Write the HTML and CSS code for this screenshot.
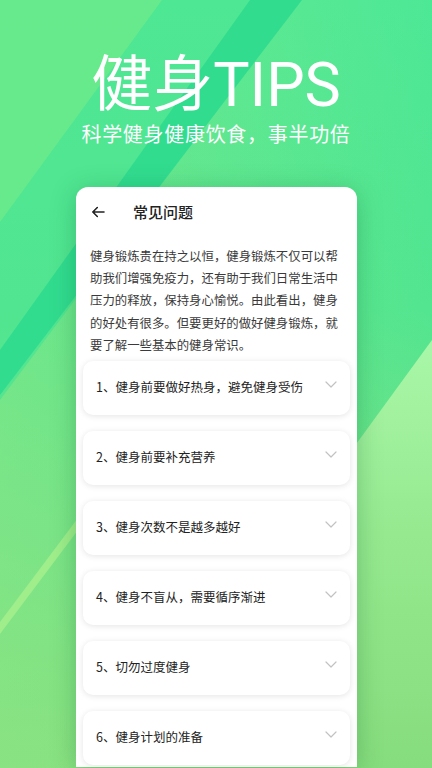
FILE: index.html
```html
<!DOCTYPE html>
<html lang="zh-CN">
<head>
<meta charset="utf-8">
<title>健身TIPS</title>
<link rel="stylesheet" href="styles.css">
</head>
<body>
<svg class="bg" width="432" height="768" viewBox="0 0 432 768" aria-hidden="true">
  <defs>
    <linearGradient id="base" x1="0" y1="0" x2="0" y2="1">
      <stop offset="0" stop-color="#4de896"/>
      <stop offset="0.4" stop-color="#53e590"/>
      <stop offset="1" stop-color="#86dd7d"/>
    </linearGradient>
    <linearGradient id="leftTint" x1="0" y1="0" x2="1" y2="0">
      <stop offset="0" stop-color="#8ee886" stop-opacity="0.5"/>
      <stop offset="1" stop-color="#8ee886" stop-opacity="0"/>
    </linearGradient>
    <linearGradient id="rightBand" x1="0" y1="0" x2="0" y2="1">
      <stop offset="0" stop-color="#a9f7a9"/>
      <stop offset="0.45" stop-color="#96e98f"/>
      <stop offset="1" stop-color="#86dd7d"/>
    </linearGradient>
  </defs>
  <rect width="432" height="768" fill="url(#base)"/>
  <polygon points="0,400 300,0 0,0" fill="#4fe592" opacity="0.5"/>
  <polygon points="0,400 300,0 432,0 432,768 0,768" fill="url(#leftTint)"/>
  <polygon points="0,0 162,0 0,222" fill="#6deb8b" opacity="0.8"/>
  <polygon points="250,0 302,0 0,395 0,350" fill="#31dc8f"/>
  <polygon points="0,622 90,502 90,514 0,634" fill="#a6f08c" opacity="0.85"/>
  <polygon points="432,340 120,768 432,768" fill="url(#rightBand)"/>
</svg>

<header class="hero">
  <h1 class="hero-title">健身TIPS</h1>
  <p class="hero-sub">科学健身健康饮食，事半功倍</p>
</header>

<main class="card">
  <div class="topbar">
    <svg class="back" width="14" height="12" viewBox="0 0 14 12" aria-hidden="true">
      <path d="M13 6H1.8M6.3 1.5L1.8 6l4.5 4.5" fill="none" stroke="#222" stroke-width="1.6" stroke-linecap="round" stroke-linejoin="round"/>
    </svg>
    <span class="topbar-title">常见问题</span>
  </div>
  <p class="intro">健身锻炼贵在持之以恒，健身锻炼不仅可以帮助我们增强免疫力，还有助于我们日常生活中压力的释放，保持身心愉悦。由此看出，健身的好处有很多。但要更好的做好健身锻炼，就要了解一些基本的健身常识。</p>
  <ul class="faq">
    <li class="faq-item"><span>1、健身前要做好热身，避免健身受伤</span><svg class="chev" width="12" height="7" viewBox="0 0 12 7"><path d="M1 1l5 5 5-5" fill="none" stroke="#c2c2c2" stroke-width="1.2" stroke-linecap="round" stroke-linejoin="round"/></svg></li>
    <li class="faq-item"><span>2、健身前要补充营养</span><svg class="chev" width="12" height="7" viewBox="0 0 12 7"><path d="M1 1l5 5 5-5" fill="none" stroke="#c2c2c2" stroke-width="1.2" stroke-linecap="round" stroke-linejoin="round"/></svg></li>
    <li class="faq-item"><span>3、健身次数不是越多越好</span><svg class="chev" width="12" height="7" viewBox="0 0 12 7"><path d="M1 1l5 5 5-5" fill="none" stroke="#c2c2c2" stroke-width="1.2" stroke-linecap="round" stroke-linejoin="round"/></svg></li>
    <li class="faq-item"><span>4、健身不盲从，需要循序渐进</span><svg class="chev" width="12" height="7" viewBox="0 0 12 7"><path d="M1 1l5 5 5-5" fill="none" stroke="#c2c2c2" stroke-width="1.2" stroke-linecap="round" stroke-linejoin="round"/></svg></li>
    <li class="faq-item"><span>5、切勿过度健身</span><svg class="chev" width="12" height="7" viewBox="0 0 12 7"><path d="M1 1l5 5 5-5" fill="none" stroke="#c2c2c2" stroke-width="1.2" stroke-linecap="round" stroke-linejoin="round"/></svg></li>
    <li class="faq-item"><span>6、健身计划的准备</span><svg class="chev" width="12" height="7" viewBox="0 0 12 7"><path d="M1 1l5 5 5-5" fill="none" stroke="#c2c2c2" stroke-width="1.2" stroke-linecap="round" stroke-linejoin="round"/></svg></li>
  </ul>
</main>
</body>
</html>
```

FILE: styles.css
```css
* { box-sizing: border-box; }

html, body {
  margin: 0;
  padding: 0;
}

body {
  position: relative;
  width: 432px;
  height: 768px;
  overflow: hidden;
  font-family: "Noto Sans CJK SC", "Noto Sans", Roboto, sans-serif;
  background: #53e590;
}

.bg {
  position: absolute;
  left: 0;
  top: 0;
  z-index: 0;
  display: block;
}

.hero {
  position: relative;
  z-index: 1;
  padding-top: 55px;
  text-align: center;
  color: #fff;
}

.hero-title {
  margin: 0;
  font-family: Roboto, "Noto Sans CJK SC", sans-serif;
  font-size: 61px;
  line-height: 60px;
  font-weight: 400;
  letter-spacing: 0;
}

.hero-sub {
  margin: 7px 0 0;
  font-size: 20px;
  line-height: 24px;
  letter-spacing: 0.7px;
  font-weight: 400;
}

.card {
  position: relative;
  z-index: 1;
  margin: 41px 0 0 76px;
  width: 281px;
  height: 580px;
  background: #fff;
  border-radius: 12px 12px 0 0;
  box-shadow: 0 4px 26px rgba(0, 90, 40, 0.28);
  overflow: hidden;
}

.topbar {
  height: 50px;
  display: flex;
  align-items: center;
  padding-left: 15px;
}

.back {
  display: block;
  flex: none;
}

.topbar-title {
  margin-left: 28px;
  font-size: 15px;
  font-weight: 500;
  color: #222;
  line-height: 20px;
}

.intro {
  margin: 8px 0 0;
  padding: 0 14px;
  font-size: 12.4px;
  line-height: 22.2px;
  color: #3a3a3a;
}

.faq {
  list-style: none;
  margin: 5px 0 0;
  padding: 0 7px;
  display: flex;
  flex-direction: column;
  gap: 16px;
}

.faq-item {
  height: 54px;
  background: #fff;
  border-radius: 10px;
  box-shadow: 0 1px 6px rgba(0, 0, 0, 0.11);
  display: flex;
  align-items: center;
  justify-content: space-between;
  padding: 0 13px 0 13px;
  font-size: 12.5px;
  color: #222;
}

.faq-item span {
  line-height: 18px;
  margin-top: -2px;
}

.chev {
  display: block;
  flex: none;
  margin-top: -7px;
}
```
